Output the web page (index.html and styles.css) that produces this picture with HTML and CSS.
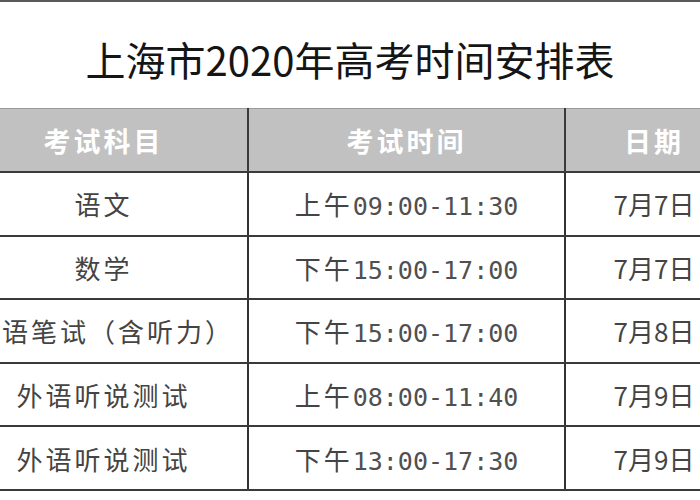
FILE: index.html
```html
<!DOCTYPE html>
<html lang="zh-CN">
<head>
<meta charset="utf-8">
<title>上海市2020年高考时间安排表</title>
<link rel="stylesheet" href="styles.css">
</head>
<body>
<div class="page">
  <h1 class="title">上海市2020年高考时间安排表</h1>
  <table class="schedule">
    <colgroup>
      <col class="c-subject">
      <col class="c-time">
      <col class="c-date">
    </colgroup>
    <thead>
      <tr>
        <th>考试科目</th>
        <th>考试时间</th>
        <th>日期</th>
      </tr>
    </thead>
    <tbody>
      <tr>
        <td class="subject">语文</td>
        <td class="time">上午<span class="num">09:00-11:30</span></td>
        <td class="date">7月7日</td>
      </tr>
      <tr>
        <td class="subject">数学</td>
        <td class="time">下午<span class="num">15:00-17:00</span></td>
        <td class="date">7月7日</td>
      </tr>
      <tr>
        <td class="subject">外语笔试（含听力）</td>
        <td class="time">下午<span class="num">15:00-17:00</span></td>
        <td class="date">7月8日</td>
      </tr>
      <tr>
        <td class="subject">外语听说测试</td>
        <td class="time">上午<span class="num">08:00-11:40</span></td>
        <td class="date">7月9日</td>
      </tr>
      <tr>
        <td class="subject">外语听说测试</td>
        <td class="time">下午<span class="num">13:00-17:30</span></td>
        <td class="date">7月9日</td>
      </tr>
    </tbody>
  </table>
</div>
</body>
</html>
```

FILE: styles.css
```css
html, body {
  margin: 0;
  padding: 0;
  overflow: hidden;
  background: #ffffff;
}

.page {
  width: 700px;
  height: 500px;
  border-top: 2px solid #5a5a5a;
  box-sizing: border-box;
  font-family: "Noto Sans CJK SC", "Noto Sans", sans-serif;
}

.title {
  margin: 0;
  padding: 37px 0 29px 0;
  height: 40px;
  line-height: 40px;
  font-size: 40px;
  font-weight: normal;
  color: #151515;
  text-align: center;
  white-space: nowrap;
}

.schedule {
  width: 783px;
  margin-left: -40px;
  border-collapse: collapse;
  table-layout: fixed;
}

.c-subject { width: 288px; }
.c-time { width: 317px; }
.c-date { width: 178px; }

.schedule th {
  height: 62px;
  padding: 0;
  background: #c1c1c1;
  color: #ffffff;
  font-size: 27px;
  font-weight: bold;
  letter-spacing: 3px;
  text-align: center;
  border-top: 1px solid #9a9a9a;
  border-right: 2px solid #3a3a3a;
  border-bottom: 2px solid #3a3a3a;
}

.schedule td {
  height: 61.6px;
  padding: 0;
  color: #444444;
  font-size: 26px;
  text-align: center;
  white-space: nowrap;
  border-right: 2px solid #333333;
  border-bottom: 2px solid #3a3a3a;
}

.schedule td.subject {
  letter-spacing: 3px;
}

.schedule td.time {
  letter-spacing: 3px;
}

.num {
  font-family: "DejaVu Sans Mono", monospace;
  font-size: 25px;
  letter-spacing: 0;
  color: #505050;
}

.schedule td.date {
  letter-spacing: 0;
}
```
